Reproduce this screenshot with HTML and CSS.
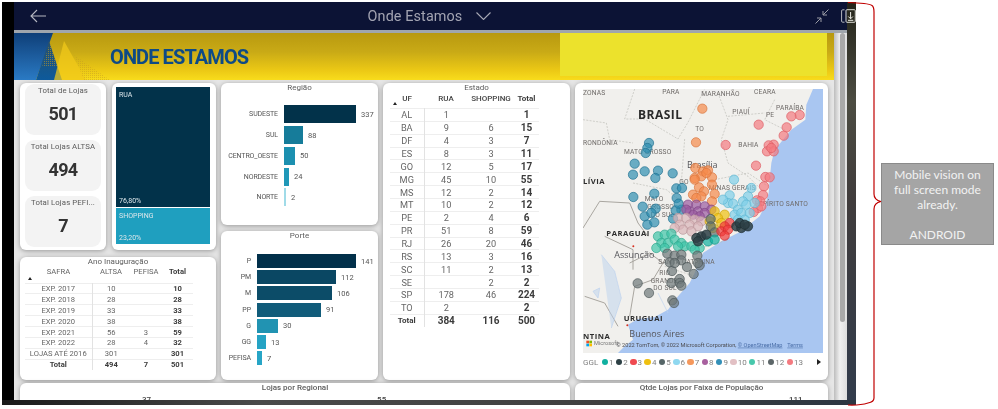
FILE: index.html
```html
<!DOCTYPE html>
<html lang="pt">
<head>
<meta charset="utf-8">
<title>Onde Estamos</title>
<link rel="stylesheet" href="styles.css">
</head>
<body>
<div class="stage">
  <div class="device">
    <div class="device-body">
      <div class="bezel-left"></div>
      <div class="screen">
        <header class="topbar">
          <svg class="back" viewBox="0 0 16 14" width="16" height="14"><path d="M16 7H1M7 1L1 7l6 6" fill="none" stroke="#b5b7c2" stroke-width="1.1"/></svg>
          <div class="top-title">Onde Estamos
            <svg class="chev" viewBox="0 0 15 8" width="15" height="8"><path d="M.5.5l7 7 7-7" fill="none" stroke="#a8a9b5" stroke-width="1.1"/></svg>
          </div>
          <svg class="collapse" viewBox="0 0 14 15" width="14" height="15"><path d="M13.5.5L8 6M8 2v4h4M.5 14.5L6 9M2 9h4v4" fill="none" stroke="#9a9ca6" stroke-width="1"/></svg>
        </header>
        <div class="report">
          <div class="page">
            <div class="banner">
              <svg class="banner-art" viewBox="0 0 96 47" width="96" height="47">
                <defs>
                  <linearGradient id="blueg" x1="0" y1="0" x2="0" y2="1"><stop offset="0" stop-color="#0f3f78"/><stop offset="1" stop-color="#2a7ac4"/></linearGradient>
                  <linearGradient id="blued" x1="0" y1="0" x2="0" y2="1"><stop offset="0" stop-color="#28506a"/><stop offset="1" stop-color="#0d5a9c"/></linearGradient>
                  <pattern id="dots" width="2" height="2" patternUnits="userSpaceOnUse"><rect width="1" height="1" fill="#c49a20"/></pattern>
                </defs>
                <polygon points="0,0 39,0 22,47 0,47" fill="url(#blueg)"/>
                <polygon points="35,8 48,47 22,47" fill="url(#blued)"/>
                <polygon points="36,10 44,34 28,34" fill="url(#dots)" opacity=".6"/>
                <polygon points="50,8 72,47 40,47" fill="#f0c81a" opacity=".75"/>
                <polygon points="60,22 96,47 70,47" fill="url(#dots)" opacity=".5"/>
              </svg>
              <h1 class="banner-title">ONDE ESTAMOS</h1>
              <div class="banner-patch"></div>
            </div>
            <div class="grid">
              <div class="col-left">
                <div class="row-top">
                  <section class="card kpis">
                    <div class="kpi"><div class="kpi-label">Total de Lojas</div><div class="kpi-value">501</div></div>
                    <div class="kpi"><div class="kpi-label">Total Lojas ALTSA</div><div class="kpi-value">494</div></div>
                    <div class="kpi"><div class="kpi-label">Total Lojas PEFI...</div><div class="kpi-value">7</div></div>
                  </section>
                  <section class="card treemap">
                    <div class="tm tm-rua"><span>RUA</span><span>76,80%</span></div>
                    <div class="tm tm-shop"><span>SHOPPING</span><span>23,20%</span></div>
                  </section>
                </div>
                <section class="card ano">
                  <div class="card-title">Ano Inauguração</div>
                  <table class="tbl tbl-ano">
                    <colgroup><col class="a1"><col class="a2"><col class="a3"><col class="a4"></colgroup>
                    <thead><tr><th class="sorted">SAFRA</th><th>ALTSA</th><th>PEFISA</th><th class="tot">Total</th></tr></thead>
                    <tbody>
                      <tr><td>EXP. 2017</td><td>10</td><td></td><td class="tot">10</td></tr>
                      <tr><td>EXP. 2018</td><td>28</td><td></td><td class="tot">28</td></tr>
                      <tr><td>EXP. 2019</td><td>33</td><td></td><td class="tot">33</td></tr>
                      <tr><td>EXP. 2020</td><td>38</td><td></td><td class="tot">38</td></tr>
                      <tr><td>EXP. 2021</td><td>56</td><td>3</td><td class="tot">59</td></tr>
                      <tr><td>EXP. 2022</td><td>28</td><td>4</td><td class="tot">32</td></tr>
                      <tr><td>LOJAS ATÉ 2016</td><td>301</td><td></td><td class="tot">301</td></tr>
                      <tr class="sum"><td>Total</td><td>494</td><td>7</td><td>501</td></tr>
                    </tbody>
                  </table>
                </section>
              </div>
              <div class="col-mid">
                <section class="card regiao">
                  <div class="card-title">Região</div>
                  <div class="bars bars-regiao">
                    <div class="bar-row"><span class="bar-label">SUDESTE</span><span class="bar-track"><i class="bar" style="width:72px;background:#02324a"></i>337</span></div>
                    <div class="bar-row"><span class="bar-label">SUL</span><span class="bar-track"><i class="bar" style="width:19px;background:#167c9a"></i>88</span></div>
                    <div class="bar-row"><span class="bar-label">CENTRO_OESTE</span><span class="bar-track"><i class="bar" style="width:11px;background:#1c90b0"></i>50</span></div>
                    <div class="bar-row"><span class="bar-label">NORDESTE</span><span class="bar-track"><i class="bar" style="width:5px;background:#2098b8"></i>24</span></div>
                    <div class="bar-row"><span class="bar-label">NORTE</span><span class="bar-track"><i class="bar" style="width:2px;background:#a0dbe8"></i>2</span></div>
                  </div>
                </section>
                <section class="card porte">
                  <div class="card-title">Porte</div>
                  <div class="bars bars-porte">
                    <div class="bar-row"><span class="bar-label">P</span><span class="bar-track"><i class="bar" style="width:99px;background:#02304a"></i>141</span></div>
                    <div class="bar-row"><span class="bar-label">PM</span><span class="bar-track"><i class="bar" style="width:79px;background:#0a4763"></i>112</span></div>
                    <div class="bar-row"><span class="bar-label">M</span><span class="bar-track"><i class="bar" style="width:75px;background:#0c4c68"></i>106</span></div>
                    <div class="bar-row"><span class="bar-label">PP</span><span class="bar-track"><i class="bar" style="width:64px;background:#115c7a"></i>91</span></div>
                    <div class="bar-row"><span class="bar-label">G</span><span class="bar-track"><i class="bar" style="width:21px;background:#2193b2"></i>30</span></div>
                    <div class="bar-row"><span class="bar-label">GG</span><span class="bar-track"><i class="bar" style="width:9px;background:#25a3c4"></i>13</span></div>
                    <div class="bar-row"><span class="bar-label">PEFISA</span><span class="bar-track"><i class="bar" style="width:5px;background:#27a5c6"></i>7</span></div>
                  </div>
                </section>
              </div>
              <section class="card estado">
                <div class="card-title">Estado</div>
                <table class="tbl tbl-estado">
                  <colgroup><col class="e1"><col class="e2"><col class="e3"><col class="e4"></colgroup>
                  <thead><tr><th class="sorted">UF</th><th>RUA</th><th>SHOPPING</th><th class="tot">Total</th></tr></thead>
                  <tbody>
                    <tr><td>AL</td><td>1</td><td></td><td class="tot">1</td></tr>
                    <tr><td>BA</td><td>9</td><td>6</td><td class="tot">15</td></tr>
                    <tr><td>DF</td><td>4</td><td>3</td><td class="tot">7</td></tr>
                    <tr><td>ES</td><td>8</td><td>3</td><td class="tot">11</td></tr>
                    <tr><td>GO</td><td>12</td><td>5</td><td class="tot">17</td></tr>
                    <tr><td>MG</td><td>45</td><td>10</td><td class="tot">55</td></tr>
                    <tr><td>MS</td><td>12</td><td>2</td><td class="tot">14</td></tr>
                    <tr><td>MT</td><td>10</td><td>2</td><td class="tot">12</td></tr>
                    <tr><td>PE</td><td>2</td><td>4</td><td class="tot">6</td></tr>
                    <tr><td>PR</td><td>51</td><td>8</td><td class="tot">59</td></tr>
                    <tr><td>RJ</td><td>26</td><td>20</td><td class="tot">46</td></tr>
                    <tr><td>RS</td><td>13</td><td>3</td><td class="tot">16</td></tr>
                    <tr><td>SC</td><td>11</td><td>2</td><td class="tot">13</td></tr>
                    <tr><td>SE</td><td></td><td>2</td><td class="tot">2</td></tr>
                    <tr><td>SP</td><td>178</td><td>46</td><td class="tot">224</td></tr>
                    <tr><td>TO</td><td>2</td><td></td><td class="tot">2</td></tr>
                    <tr class="sum"><td>Total</td><td>384</td><td>116</td><td>500</td></tr>
                  </tbody>
                </table>
              </section>
              <section class="card mapcard">
                <svg class="map" viewBox="25 28 720 792" width="240" height="264">
                  <rect x="25" y="28" width="720" height="792" fill="#f1f0ed"/>
                  <polygon fill="#a9c6f1" points="715,28 695,75 692,120 650,150 625,180 600,210 590,250 585,300 582,340 570,380 555,410 530,430 500,455 470,470 440,485 400,510 385,520 360,580 345,610 310,650 280,690 240,712 190,718 160,735 165,750 175,780 150,800 130,820 745,820 745,28"/>
                  <g class="borders">
                    <path d="M180 28l-30 90 60 0 100 60 30-50 50-100"/>
                    <path d="M25 120l70 10 10 50 70 10"/>
                    <path d="M330 178l-10 130-30 40"/>
                    <path d="M430 40l30 80-20 60 20 70 60 40 30 30"/>
                    <path d="M600 60l-30 60 60 30"/>
                    <path d="M460 110l110-10"/>
                    <path d="M175 310l100 20 50 40"/>
                    <path d="M420 300l100-20 60 40"/>
                    <path d="M310 510l90-10 60-20"/>
                    <path d="M270 560l90 30"/>
                  </g>
                  <g class="roads">
                    <path d="M25 445l50-80 90 5 25 60 30 40"/>
                    <path d="M90 470l85 40 0 60"/>
                    <path d="M165 550l60-30 40 30-30 50-55 20-15 90"/>
                    <path d="M30 650l60 20 40 70"/>
                  </g>
                  <g class="rivers">
                    <path d="M80 525l40 50 20 80-30 90"/>
                    <path d="M75 625l-20 10 15 20z"/>
                    <path d="M250 640l30 60"/>
                  </g>
                  <g class="lbl">
                    <text x="263" y="44">PARÁ</text>
                    <text x="380" y="50">MARANHÃO</text>
                    <text x="538" y="44">CEARÁ</text>
                    <text x="25" y="45">ZONAS</text>
                    <text x="473" y="103">PIAUÍ</text>
                    <text x="604" y="91">PARAÍBA</text>
                    <text x="574" y="112">PE</text>
                    <text x="362" y="153">TO</text>
                    <text x="491" y="203">BAHIA</text>
                    <text x="25" y="195">RONDÔNIA</text>
                    <text x="148" y="224">MATO GROSSO</text>
                    <text x="314" y="312">GO</text>
                    <text x="402" y="330">MINAS GERAIS</text>
                    <text x="210" y="365">MATO</text>
                    <text x="218" y="387">GROSSO</text>
                    <text x="228" y="411">DO SUL</text>
                    <text x="540" y="378">ESPÍRITO SANTO</text>
                    <text x="251" y="554">SANTA CATARINA</text>
                    <text x="254" y="586">RIO</text>
                    <text x="228" y="610">GRANDE</text>
                    <text x="236" y="632">DO SUL</text>
                  </g>
                  <text class="big" x="190" y="117">BRASIL</text>
                  <text class="city" x="337" y="264">Brasília</text>
                  <text class="bold" x="25" y="313">LÍVIA</text>
                  <text class="bold" x="95" y="470">PARAGUAI</text>
                  <text class="city" x="119" y="534">Assunção</text>
                  <text class="bold" x="147" y="724">URUGUAI</text>
                  <text class="bold" x="25" y="778">NTINA</text>
                  <text class="city" x="164" y="772">Buenos Aires</text>
                  <g class="dots" fill="#2f8fb0" stroke="#1f7090"><circle cx="223" cy="190" r="14"/><circle cx="218" cy="205" r="14"/><circle cx="213" cy="220" r="14"/><circle cx="180" cy="252" r="14"/><circle cx="210" cy="275" r="14"/><circle cx="175" cy="285" r="14"/><circle cx="250" cy="273" r="14"/><circle cx="242" cy="295" r="14"/><circle cx="294" cy="281" r="14"/><circle cx="305" cy="326" r="14"/><circle cx="322" cy="325" r="14"/><circle cx="239" cy="342" r="14"/><circle cx="176" cy="352" r="14"/><circle cx="306" cy="355" r="14"/><circle cx="204" cy="381" r="14"/><circle cx="243" cy="387" r="14"/><circle cx="210" cy="410" r="14"/><circle cx="230" cy="400" r="14"/><circle cx="320" cy="390" r="14"/><circle cx="303" cy="392" r="14"/><circle cx="295" cy="417" r="14"/><circle cx="218" cy="435" r="14"/><circle cx="239" cy="428" r="14"/><circle cx="312" cy="372" r="14"/></g>
                  <g class="dots" fill="#f58a4c" stroke="#d8743c"><circle cx="383" cy="87" r="14"/><circle cx="364" cy="188" r="14"/><circle cx="362" cy="265" r="14"/><circle cx="385" cy="275" r="14"/><circle cx="400" cy="272" r="14"/><circle cx="360" cy="295" r="14"/><circle cx="380" cy="290" r="14"/><circle cx="412" cy="293" r="14"/><circle cx="412" cy="315" r="14"/><circle cx="373" cy="323" r="14"/><circle cx="388" cy="335" r="14"/><circle cx="355" cy="345" r="14"/><circle cx="380" cy="350" r="14"/><circle cx="420" cy="343" r="14"/><circle cx="412" cy="365" r="14"/><circle cx="360" cy="300" r="14"/><circle cx="365" cy="355" r="14"/><circle cx="395" cy="280" r="14"/></g>
                  <g class="dots" fill="#f47a80" stroke="#dc5c64"><circle cx="675" cy="106" r="14"/><circle cx="650" cy="110" r="14"/><circle cx="552" cy="135" r="14"/><circle cx="636" cy="143" r="14"/><circle cx="627" cy="168" r="14"/><circle cx="453" cy="196" r="14"/><circle cx="597" cy="195" r="14"/><circle cx="582" cy="197" r="14"/><circle cx="577" cy="215" r="14"/><circle cx="597" cy="215" r="14"/><circle cx="590" cy="205" r="14"/><circle cx="544" cy="258" r="14"/><circle cx="572" cy="292" r="14"/><circle cx="585" cy="293" r="14"/><circle cx="568" cy="320" r="14"/><circle cx="565" cy="346" r="14"/><circle cx="547" cy="362" r="14"/><circle cx="557" cy="365" r="14"/><circle cx="550" cy="385" r="14"/><circle cx="560" cy="380" r="14"/><circle cx="537" cy="397" r="14"/></g>
                  <g class="dots" fill="#7fcfe8" stroke="#5fb6d2"><circle cx="478" cy="300" r="14"/><circle cx="465" cy="347" r="14"/><circle cx="520" cy="350" r="14"/><circle cx="530" cy="325" r="14"/><circle cx="505" cy="365" r="14"/><circle cx="460" cy="370" r="14"/><circle cx="475" cy="372" r="14"/><circle cx="490" cy="390" r="14"/><circle cx="515" cy="375" r="14"/><circle cx="480" cy="405" r="14"/><circle cx="500" cy="400" r="14"/><circle cx="525" cy="400" r="14"/><circle cx="540" cy="370" r="14"/><circle cx="490" cy="420" r="14"/><circle cx="510" cy="420" r="14"/><circle cx="445" cy="360" r="14"/></g>
                  <g class="dots" fill="#9a5aa0" stroke="#7f4585"><circle cx="340" cy="375" r="14"/><circle cx="365" cy="375" r="14"/><circle cx="390" cy="380" r="14"/><circle cx="410" cy="390" r="14"/><circle cx="345" cy="395" r="14"/><circle cx="370" cy="395" r="14"/><circle cx="390" cy="400" r="14"/><circle cx="355" cy="405" r="14"/><circle cx="375" cy="410" r="14"/><circle cx="335" cy="390" r="14"/></g>
                  <g class="dots" fill="#d9b3b8" stroke="#b8959a"><circle cx="310" cy="415" r="14"/><circle cx="335" cy="415" r="14"/><circle cx="360" cy="420" r="14"/><circle cx="380" cy="425" r="14"/><circle cx="315" cy="435" r="14"/><circle cx="345" cy="435" r="14"/><circle cx="370" cy="440" r="14"/><circle cx="325" cy="450" r="14"/><circle cx="350" cy="455" r="14"/><circle cx="300" cy="445" r="14"/></g>
                  <g class="dots" fill="#efc010" stroke="#cda30c"><circle cx="420" cy="395" r="14"/><circle cx="450" cy="405" r="14"/><circle cx="430" cy="415" r="14"/><circle cx="405" cy="425" r="14"/><circle cx="440" cy="430" r="14"/><circle cx="415" cy="445" r="14"/></g>
                  <g class="dots" fill="#607070" stroke="#4a5a5a"><circle cx="408" cy="418" r="14"/><circle cx="408" cy="440" r="14"/><circle cx="420" cy="458" r="14"/></g>
                  <g class="dots" fill="#ef3a3a" stroke="#cf2a2a"><circle cx="465" cy="430" r="14"/><circle cx="450" cy="440" r="14"/><circle cx="440" cy="455" r="14"/><circle cx="460" cy="450" r="14"/><circle cx="450" cy="468" r="14"/></g>
                  <g class="dots" fill="#3fc4a8" stroke="#2da68c"><circle cx="250" cy="470" r="14"/><circle cx="270" cy="465" r="14"/><circle cx="290" cy="462" r="14"/><circle cx="260" cy="490" r="14"/><circle cx="280" cy="490" r="14"/><circle cx="300" cy="480" r="14"/><circle cx="320" cy="490" r="14"/><circle cx="245" cy="505" r="14"/><circle cx="270" cy="505" r="14"/><circle cx="330" cy="500" r="14"/><circle cx="350" cy="500" r="14"/><circle cx="375" cy="505" r="14"/><circle cx="310" cy="500" r="14"/><circle cx="360" cy="510" r="14"/></g>
                  <g class="dots" fill="#10b0a0" stroke="#0c9488"><circle cx="400" cy="485" r="14"/><circle cx="420" cy="480" r="14"/></g>
                  <g class="dots dark" fill="#2d4045" stroke="#1e2e32"><circle cx="485" cy="440" r="14"/><circle cx="500" cy="445" r="14"/><circle cx="520" cy="440" r="14"/><circle cx="495" cy="430" r="14"/><circle cx="510" cy="435" r="14"/><circle cx="380" cy="470" r="14"/><circle cx="365" cy="475" r="14"/><circle cx="395" cy="465" r="14"/><circle cx="370" cy="485" r="14"/></g>
                  <g class="dots" fill="#6d7779" stroke="#4c5658"><circle cx="278" cy="522" r="14"/><circle cx="300" cy="528" r="14"/><circle cx="320" cy="525" r="14"/><circle cx="368" cy="528" r="14"/><circle cx="285" cy="548" r="14"/><circle cx="320" cy="542" r="14"/><circle cx="375" cy="557" r="14"/><circle cx="337" cy="562" r="14"/><circle cx="292" cy="574" r="14"/><circle cx="357" cy="583" r="14"/><circle cx="189" cy="611" r="14"/><circle cx="223" cy="640" r="14"/><circle cx="315" cy="598" r="14"/><circle cx="290" cy="610" r="14"/><circle cx="315" cy="610" r="14"/><circle cx="320" cy="618" r="14"/><circle cx="293" cy="662" r="14"/><circle cx="298" cy="670" r="14"/><circle cx="370" cy="550" r="14"/><circle cx="300" cy="550" r="14"/></g>
                  <circle cx="176" cy="500" r="3" fill="#d83020"/><circle cx="158" cy="737" r="3" fill="#d83020"/>
                  <g><rect x="35" y="783" width="8" height="8" fill="#f25022"/><rect x="44" y="783" width="8" height="8" fill="#7fba00"/><rect x="35" y="792" width="8" height="8" fill="#00a4ef"/><rect x="44" y="792" width="8" height="8" fill="#ffb900"/></g>
                  <text class="attr ms" x="58" y="796">Microsoft</text>
                  <text class="attr" x="125" y="801">© 2022 TomTom, © 2022 Microsoft Corporation, <tspan class="ul">© OpenStreetMap</tspan>  <tspan class="ul" dx="10">Terms</tspan></text>
                </svg>
                <div class="legend">
                  <span class="lg-title">GGL</span>
                  <span class="lg"><i style="background:#10b0a0"></i>1</span>
                  <span class="lg"><i style="background:#2d4045"></i>2</span>
                  <span class="lg"><i style="background:#ef4a50"></i>3</span>
                  <span class="lg"><i style="background:#efc010"></i>4</span>
                  <span class="lg"><i style="background:#566668"></i>5</span>
                  <span class="lg"><i style="background:#8fd8f0"></i>6</span>
                  <span class="lg"><i style="background:#f5985c"></i>7</span>
                  <span class="lg"><i style="background:#a8609f"></i>8</span>
                  <span class="lg"><i style="background:#3490b8"></i>9</span>
                  <span class="lg"><i style="background:#e2c0c4"></i>10</span>
                  <span class="lg"><i style="background:#48c8ac"></i>11</span>
                  <span class="lg"><i style="background:#5c6668"></i>12</span>
                  <span class="lg"><i style="background:#f47a80"></i>13</span>
                  <span class="lg-next"></span>
                </div>
              </section>
              <section class="card wide">
                <div class="card-title strong">Lojas por Regional</div>
                <div class="peek peek-a"><span>37</span><span>55</span></div>
              </section>
              <section class="card pop">
                <div class="card-title strong">Qtde Lojas por Faixa de População</div>
                <div class="peek peek-b"><span>111</span></div>
              </section>
            </div>
          </div>
          <div class="scroller"><div class="thumb"></div></div>
        </div>
      </div>
      <div class="bezel-right"></div>
    </div>
    <div class="device-bottom"></div>
    <svg class="dl-icon" viewBox="0 0 15 14" width="15" height="14"><path d="M3.5.8H1.6Q.6.8.6 2v10q0 1.200 1 1.200h1.900" fill="none" stroke="#b6b8be" stroke-width="1"/><rect x="5" y=".7" width="9.300" height="12.600" rx="1" fill="none" stroke="#dcdcd6" stroke-width="1"/><path d="M9.600 3v6.500M7.300 7.500l2.300 2.300 2.300-2.300M7 11.300h5.300" fill="none" stroke="#f0f0ea" stroke-width="1"/></svg>
  </div>
  <aside class="note">Mobile vision on<br>full screen mode<br>already.<br><br>ANDROID</aside>
</div>
<svg class="brace" viewBox="0 0 998 409" width="998" height="409"><path d="M848 2.500Q868 3 872 5.500Q874 7 874 12V194Q874 200 881 201.500Q874 203 874 209V398Q874 402 868 403Q860 405.500 848 405" fill="none" stroke="#c00000" stroke-width="1.200"/></svg>
</body>
</html>
```

FILE: styles.css
```css
* { box-sizing: border-box; }
html, body { margin: 0; padding: 0; background: #fff; }
body { width: 998px; height: 409px; position: relative; overflow: hidden; font-family: Roboto, "Liberation Sans", sans-serif; }
.stage { display: flex; align-items: flex-start; }

.device { position: relative; width: 854px; height: 403px; margin: 2px 0 0 2px; display: flex; flex-direction: column; filter: blur(.5px); }
.device-body { flex: 1; display: flex; min-height: 0; }
.bezel-left { width: 12px; background: #000; }
.bezel-right { width: 9px; background: linear-gradient(#24241a, #4c4c42 25%, #403c3c 50%, #323c4c 100%); }
.device-bottom { height: 5px; background: linear-gradient(90deg, #1a1a1a, #4a4a4a 30%, #404040 70%, #2c3642); }
.screen { width: 833px; display: flex; flex-direction: column; min-height: 0; }

.topbar { height: 31px; flex: none; background: #0c1335; border-bottom: 3px solid #a0a6ac; display: grid; grid-template-columns: 1fr auto 1fr; align-items: center; padding: 0 18px 0 16px; }
.back { justify-self: start; }
.collapse { justify-self: end; }
.top-title { color: #a3a4b2; font: 14.400px Roboto, sans-serif; letter-spacing: .1px; display: flex; align-items: center; gap: 14px; }
.dl-icon { position: absolute; left: 839px; top: 7px; }

.report { flex: 1; display: flex; min-height: 0; overflow: hidden; background: #e6e6e6; }
.page { width: 820px; flex: none; display: flex; flex-direction: column; }
.scroller { flex: 1; background: linear-gradient(90deg, #bdbdbd, #f0f0f0 45%, #dedede); padding: 0 2px 0 6px; }
.thumb { height: 289px; background: #a9a9a9; border-radius: 3px; }

.banner { height: 47px; flex: none; position: relative; display: flex; align-items: center; background: linear-gradient(#b8990f, #c9aa16 40%, #ecc915 80%, #f8dc1c); }
.banner-art { flex: none; }
.banner-title { margin: 0; font: 700 20px Roboto, sans-serif; letter-spacing: -.9px; color: #0d4a86; }
.banner-patch { position: absolute; left: 546px; right: 7px; top: 0; bottom: 4px; background: #ece22c; }

.grid { display: grid; grid-template-columns: 196px 157px 187px 253px; grid-template-rows: 297px 40px; column-gap: 5px; row-gap: 3px; padding: 3px 0 0 6px; }
.card { background: #fff; border-radius: 6px; box-shadow: 0 1px 5px rgba(0,0,0,.35); }
.card-title { font-size: 8px; line-height: 9px; text-align: center; color: #5c5c5c; }
.card-title.strong { font-size: 8px; font-weight: 500; }

.col-left { display: flex; flex-direction: column; gap: 7px; }
.row-top { display: flex; gap: 6px; height: 167px; }
.kpis { width: 86px; padding: 1px 5px; display: flex; flex-direction: column; gap: 5px; }
.kpi { height: 51px; background: #f3f3f3; border-radius: 9px; text-align: center; color: #333; }
.kpi-label { font-size: 7.800px; line-height: 10px; padding-top: 2px; color: #5a5a5a; letter-spacing: .1px; white-space: nowrap; }
.kpi-value { font-size: 18px; font-weight: 700; line-height: 22px; margin-top: 7px; letter-spacing: -.6px; color: #333; }
.treemap { width: 104px; padding: 4px 6px 5px 4px; display: flex; flex-direction: column; gap: 1px; }
.tm { display: flex; flex-direction: column; justify-content: space-between; color: #dce6ea; font-size: 7px; line-height: 9px; padding: 4px 3px 1px; }
.tm-rua { height: 120px; background: #02324a; }
.tm-shop { height: 36px; background: #1f9fbf; }

.ano { height: 123px; }
.tbl { border-collapse: collapse; table-layout: fixed; color: #666; text-align: center; }
.tbl th { font-weight: 400; padding: 0; vertical-align: top; }
.tbl td { padding: 0; border-top: 1px solid #eeeeee; }
.tbl td:first-child { border-right: 1px solid #e2e2e2; }
.tbl .tot, .tbl .sum td { font-weight: 700; color: #3c3c3c; }
.tbl .sorted { position: relative; }
.tbl .sorted::after { content: ""; position: absolute; left: 3px; bottom: 3px; border: 2px solid transparent; border-top: 0; border-bottom: 3px solid #222; }
.tbl-ano { width: 168px; margin-left: 5px; font-size: 7.600px; }
.tbl-ano col.a1 { width: 67px; } .tbl-ano col.a2 { width: 38px; } .tbl-ano col.a3 { width: 32px; } .tbl-ano col.a4 { width: 31px; }
.tbl-ano thead tr { height: 17px; }
.tbl-ano th { line-height: 10px; padding-top: 1px; }
.tbl-ano tbody tr { height: 10.900px; }
.tbl-ano td { line-height: 9px; }
.tbl-estado { width: 149px; margin-left: 7px; font-size: 9.200px; }
.tbl-estado col.e1 { width: 34px; } .tbl-estado col.e2 { width: 44px; } .tbl-estado col.e3 { width: 46px; } .tbl-estado col.e4 { width: 25px; }
.tbl-estado thead tr { height: 16.500px; }
.tbl-estado th { font-size: 8px; font-weight: 500; color: #444; white-space: nowrap; line-height: 12px; padding-top: 1px; }
.tbl-estado tbody tr { height: 12.870px; }
.tbl-estado td { line-height: 11px; }
.tbl-estado td.tot, .tbl-estado .sum td { font-size: 10px; }
.tbl-estado .sum td:first-child { font-size: 8px; }

.col-mid { display: flex; flex-direction: column; gap: 6px; }
.regiao { height: 142px; }
.porte { height: 149px; }
.bars { font-size: 7.500px; color: #555; }
.bar-row { display: grid; column-gap: 6px; align-items: center; }
.bar-label { text-align: right; white-space: nowrap; font-size: 7px; letter-spacing: -.1px; }
.bar-track { display: flex; align-items: center; gap: 5px; }
.bar { display: block; }
.bars-regiao { margin-top: 12px; }
.bars-regiao .bar-row { grid-template-columns: 57px 1fr; height: 20.750px; }
.bars-regiao .bar { height: 18px; }
.bars-porte { margin-top: 13px; }
.bars-porte .bar-row { grid-template-columns: 30px 1fr; height: 16.200px; }
.bars-porte .bar { height: 14px; }

.mapcard { padding: 6px 5px 0 8px; }
.map { display: block; }
.borders path { fill: none; stroke: #bdbcb6; stroke-width: 2; stroke-dasharray: 6 4; }
.roads path { fill: none; stroke: #a9a6a0; stroke-width: 3; }
.rivers path { fill: #bcd2ee; stroke: #bcd2ee; stroke-width: 2; fill-opacity: .5; }
.lbl text { font: 20px Roboto, sans-serif; fill: #6e6a68; letter-spacing: .5px; }
.big { font: 700 36px "Open Sans", sans-serif; fill: #2a2a2a; letter-spacing: 1.500px; }
.bold { font: 700 23px "Open Sans", sans-serif; fill: #2d2d2d; letter-spacing: 1.500px; }
.city { font: 27px "Open Sans", sans-serif; fill: #55555a; }
.dots circle { fill-opacity: .7; stroke-width: 2; }
.dots.dark circle { fill-opacity: .85; }
.attr { font: 16.800px Roboto, sans-serif; fill: #4c4c50; }
.attr.ms { fill: #777; }
.ul { text-decoration: underline; fill: #4a6ea8; }

.legend { display: flex; align-items: center; gap: 2.300px; margin-top: 4px; font-size: 8px; color: #808080; height: 10px; }
.lg-title { margin-right: 1px; }
.lg { display: flex; align-items: center; gap: 1px; }
.lg i { display: block; width: 6.500px; height: 6.500px; border-radius: 50%; }
.lg-next { margin-left: auto; margin-right: 2px; border: 3px solid transparent; border-left: 4px solid #222; border-right: 0; }

.wide { grid-column: 1 / 4; }
.peek { font-size: 8px; font-weight: 500; color: #444; display: flex; margin-top: 3px; }
.peek-a { padding-left: 122px; gap: 226px; }
.peek-b { padding-left: 214px; }

.note { width: 113px; height: 82px; margin: 163px 0 0 25px; padding-top: 3px; background: #a5a5a5; border: 1px solid #8a8a8a; color: #f2f2f2; font: 12px/15px Lato, "Open Sans", sans-serif; text-align: center; }
.brace { position: absolute; left: 0; top: 0; pointer-events: none; }
```
